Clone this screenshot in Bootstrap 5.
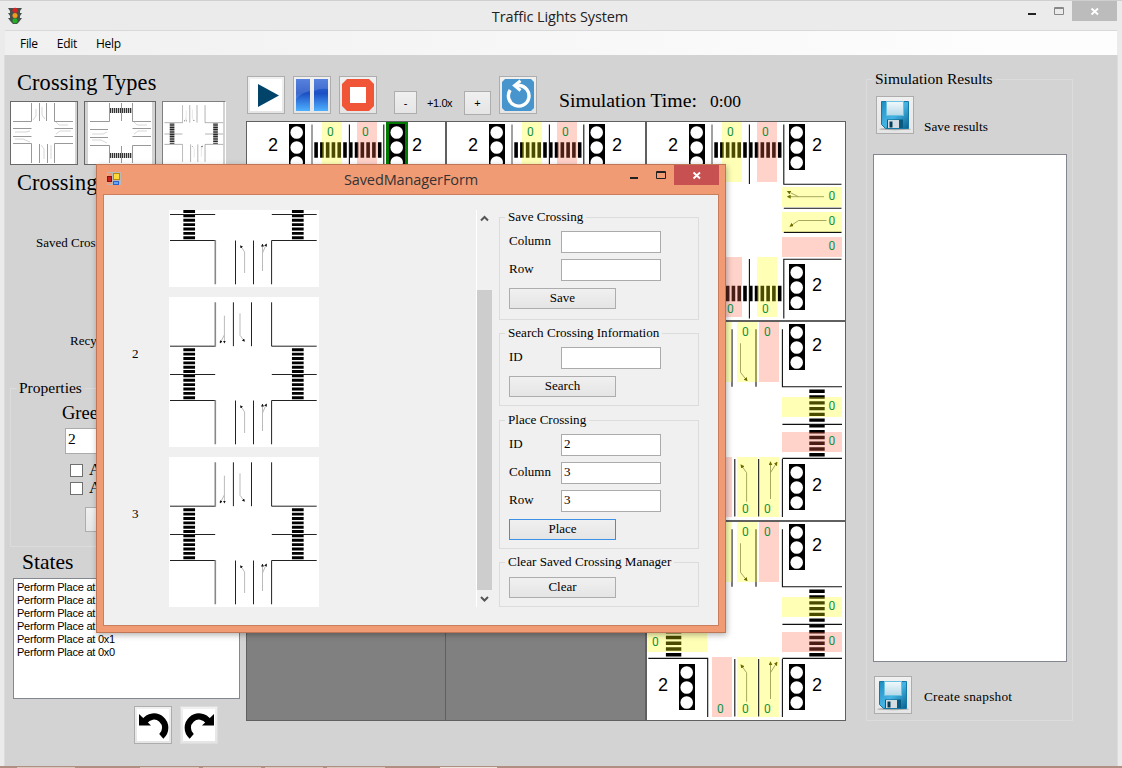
<!DOCTYPE html>
<html lang="en">
<head>
<meta charset="utf-8">
<title>Traffic Lights System</title>
<link href="https://cdn.jsdelivr.net/npm/bootstrap@5.3.0/dist/css/bootstrap.min.css" rel="stylesheet">
<style>
  body { background:#ebebeb; font-family:"Liberation Serif",serif; font-size:13px; line-height:16px; color:#000; overflow:hidden; }
  .app-window { width:1122px; height:768px; border-top:1px solid #cfcfcf; overflow:hidden; }
  .title-row { height:29px; font-family:"Open Sans",sans-serif; font-size:14.5px; letter-spacing:-.12px; color:#222; padding-top:2px; }
  .title-row .app-icon { left:6px; top:4px; }
  .win-buttons { top:0; }
  .win-btn-box { width:27px; height:20px; }
  .close-box { width:45px; height:20px; background:#bcbcbc; }
  .menu-row { height:25px; margin:0 5px; border-top:1px solid #d9d9d9; background:linear-gradient(90deg,#f0f0f0,#fdfdfd 90%); font-family:"Open Sans",sans-serif; font-size:12px; letter-spacing:-.3px; padding:1px 0 0 15px; gap:19px; }
  .work-area { height:711px; margin:0 4px; border:1px solid #dcdcdc; border-width:0 1px; background:#d3d3d3; }
  .bottom-strip { height:2px; background:linear-gradient(90deg,#b08f82 17px,#d9c7be 17px 75px,#b08f82 75px 140px,#d9c7be 140px 199px,#b08f82 199px 203px,#d9c7be 203px 261px,#b08f82 261px 265px,#d9c7be 265px 323px,#b08f82 323px 327px,#d9c7be 327px 385px,#b08f82 385px 440px,#f0e6e0 440px 497px,#b08f82 497px) 0 1px/100% 1px no-repeat #b08f82; }
  .col-left { width:241px; }
  .col-board { width:600px; }
  .big-title { font-size:22.3px; height:28px; line-height:28px; white-space:nowrap; }
  .line16 { height:16px; white-space:nowrap; }
  .type-btn { height:64px; border:1px solid #696969; background:#d3d3d3; }
  .type-btn.sunken { border-color:#808080 #fff #d3d3d3 #808080; }
  .type-btn svg, .board svg, .thumb svg { display:block; }
  .group-frame { border:1px solid #dcdcdc; position:relative; }
  .group-caption { position:absolute; top:-9px; left:5px; padding:0 3px; white-space:nowrap; line-height:16px; }
  .gray-back .group-caption { background:#d3d3d3; font-size:15.5px; }
  .field-box { background:#fff; border:1px solid #ababab; height:22px; width:100px; padding:0 2px; line-height:17px; }
  .tick-box { width:13px; height:13px; border:1px solid #707070; background:#fff; }
  .state-list { width:227px; height:121px; border:1px solid #828790; background:#fff; font:11px/13px "Liberation Sans",sans-serif; letter-spacing:-.24px; padding:2px 3px; }
  .tool-btn { width:38px; height:38px; border:1px solid #adadad; background:linear-gradient(#f0f0f0,#e5e5e5); padding:0; }
  .tool-btn svg { display:block; margin:2px; }
  .tool-bar { height:66px; }
  .speed-btn { border:1px solid #adadad; background:linear-gradient(#f0f0f0,#e5e5e5); font:11px/22px "Liberation Sans",sans-serif; text-align:center; }
  .board { width:600px; height:600px; display:grid; grid-template-columns:repeat(3,200px); background:gray; outline:1px solid #606060; outline-offset:-1px; }
  .board .n2 { font-family:"Liberation Sans",sans-serif; font-size:18px; }
  .board .n0 { font-family:Roboto,sans-serif; font-size:12px; fill:#12913f; }
  .results-frame { width:207px; height:642px; margin:24px 0 0 20px; }
  .results-list { width:194px; height:508px; border:1px solid #828790; background:#fff; }

  .dialog-window { position:absolute; left:96px; top:164px; width:630px; height:469px; background:#f19b75; border:1px solid #bf7655; box-shadow:1px 2px 6px rgba(0,0,0,.3); }
  .dialog-title { height:29px; font-family:"Open Sans",sans-serif; font-size:14.5px; letter-spacing:-.1px; color:#333; padding-top:1px; }
  .dialog-title .app-icon { left:9px; top:6px; }
  .dialog-title .close-box { background:#c75050; }
  .dialog-body { margin:0 6px; height:432px; background:#f0f0f0; border:1px solid #c97f5e; padding-top:15px; }
  .saved-list { width:372px; height:397px; overflow:hidden; }
  .saved-row { height:150px; margin-bottom:10px; }
  .saved-id { width:65px; padding:0 0 36px 28px; line-height:16px; }
  .thumb { width:150px; height:150px; background:#fff; }
  .scroll-track { width:16px; height:397px; border-left:1px solid #fff; }
  .scroll-thumb { height:300px; background:#cdcdcd; }
  .group-col { width:200px; margin-left:7px; }
  .group-col .group-frame { padding:13px 0 0 9px; margin-bottom:14px; }
  .group-col .group-caption { background:#f0f0f0; font-size:13.1px; }
  .field-line { height:22px; margin-bottom:6px; }
  .field-line span { width:52px; line-height:20px; }
  .push-btn { display:block; width:107px; height:21px; margin-top:7px; border:1px solid #adadad; background:linear-gradient(#f0f0f0,#e5e5e5); text-align:center; line-height:17px; padding:0; }
  .push-btn.is-default { border-color:#3c91e6; }
</style>
</head>
<body>
<svg width="0" height="0" class="position-absolute">
  <defs>
    <marker id="tip" viewBox="0 0 6 6" refX="4" refY="3" markerWidth="4" markerHeight="4" markerUnits="userSpaceOnUse" orient="auto"><path d="M0 0L6 3L0 6z" fill="#333300"/></marker>
    <marker id="tipS" viewBox="0 0 6 6" refX="4" refY="3" markerWidth="3" markerHeight="3" markerUnits="userSpaceOnUse" orient="auto"><path d="M0 0L6 3L0 6z" fill="#111"/></marker>
    <!-- three-lamp traffic light -->
    <symbol id="lamp" viewBox="0 0 16 46"><rect width="16" height="46"/><g fill="#fff"><circle cx="7.7" cy="8.5" r="6.3"/><circle cx="7.7" cy="23.5" r="6.3"/><circle cx="7.7" cy="38.5" r="6.3"/></g></symbol>
    <!-- board crossing with horizontal pedestrian strips -->
    <symbol id="crossA" viewBox="0 0 200 200">
      <rect width="200" height="200" fill="#fff"/>
      <g stroke-width="15.4" stroke="#000" stroke-dasharray="3.6 2.18"><path d="M68.3 29H136M68.3 172.5H136"/></g>
      <g stroke="#111" fill="none" stroke-width="1.1"><path d="M103.4 3.5V63M103.4 138V197.5M137.8 3.5V63.2H195.5M137.8 87.3H195.5M137.8 111.4H195.5M195.5 138.2H137.8V197.5"/><path d="M66 3.5V63H4M66 197V138H4" stroke="#555"/></g>
      <g fill="none" stroke="#777" stroke-width=".9"><path d="M178 75.7H142" marker-end="url(#tip)"/><path d="M152.5 75.7L142 70.5" marker-end="url(#tip)"/><path d="M180.5 99.5H152.5L144.5 105" marker-end="url(#tip)"/></g>
      <g fill="#ff0" fill-opacity=".29"><path d="M76 1h20v60H76zM136 66h60v20h-60zM136 91h60v20h-60zM111 136h20v60h-20z"/></g>
      <g fill="#ff6347" fill-opacity=".29"><path d="M111 1h20v60h-20zM136 116h60v20h-60zM76 136h20v60H76z"/></g>
      <use href="#lamp" x="43" y="3" width="16" height="46"/><use href="#lamp" x="143" y="3" width="16" height="46"/><use href="#lamp" x="143" y="143" width="16" height="46"/>
      <path d="M0 .5H200M0 199.5H200M.5 0V200M199.5 0V200" stroke="#606060"/>
    </symbol>
    <!-- board crossing with vertical pedestrian strips -->
    <symbol id="crossB" viewBox="0 0 200 200">
      <rect width="200" height="200" fill="#fff"/>
      <g stroke-width="15.4" stroke="#000" stroke-dasharray="3.4 2.37"><path d="M171 68.6V136M27.6 68.6V136"/></g>
      <g stroke="#111" fill="none" stroke-width="1.1"><path d="M86 8.3V65.7M110 8.3V65.7M136.4 8.3V65.7H196M136.4 103.4H196M196 137.4H136.4M136.4 138V196M88.8 138V195.5M112.7 138V195.5M2.3 137.4H61.7V196M2.3 103.4H62"/></g>
      <g fill="none" stroke="#777" stroke-width=".9"><path d="M94.5 22.3V51.3L100.7 59.3" marker-end="url(#tip)"/><path d="M100.6 180.7V151.7L95.3 144.3" marker-end="url(#tip)"/><path d="M124.5 178V141.7" marker-end="url(#tip)"/><path d="M124.5 151.7L130.7 141.7" marker-end="url(#tip)"/></g>
      <g fill="#ff0" fill-opacity=".29"><path d="M66 1h20v60H66zM91 1h20v60H91zM136 76h60v20h-60zM91 136h20v60H91zM113 136h20v60h-20zM1 111h60v20H1z"/></g>
      <g fill="#ff6347" fill-opacity=".29"><path d="M113 1h20v60h-20zM136 111h60v20h-60zM66 136h20v60H66z"/></g>
      <use href="#lamp" x="143" y="3" width="16" height="46"/><use href="#lamp" x="143" y="143" width="16" height="46"/><use href="#lamp" x="33" y="143" width="16" height="46"/>
      <path d="M0 .5H200M0 199.5H200M.5 0V200M199.5 0V200" stroke="#606060"/>
    </symbol>
    <!-- saved crossing picture -->
    <symbol id="crossThumb" viewBox="0 0 150 150">
      <g stroke-width="11.7" stroke="#000" stroke-dasharray="2.9 1.46"><path d="M20.2 51.3V102.2M128.8 51.3V102.2"/></g>
      <g stroke="#222" fill="none"><path d="M64.4 5.3V49.2M82.5 5.3V49.2M102.6 5.3V49.2H147.7M1 49.2H46.5M1 77.5H46.2M102.8 77.5H147.7M1 103.5H46.5M147.7 103.5H102.6V147.3M66.5 103.5V147.3M84.5 103.5V147.3"/><path d="M46.3 5.3V49.6M46.3 103.2V147.3" stroke="#888" stroke-width="1.6"/></g>
      <g fill="none" stroke="#bbb"><path d="M55.4 18.7V45.6" marker-end="url(#tipS)"/><path d="M55.4 38L51.3 45.6" marker-end="url(#tipS)"/><path d="M71 16.3V38.3L75.2 44" marker-end="url(#tipS)"/><path d="M75.6 136V115L71.7 109" marker-end="url(#tipS)"/><path d="M93.5 134V107.5" marker-end="url(#tipS)"/><path d="M93.5 116L97.3 107.3" marker-end="url(#tipS)"/></g>
    </symbol>
    <!-- floppy disk -->
    <linearGradient id="blueG" x1="0" y1="0" x2="1" y2="1"><stop offset="0" stop-color="#1f8cc0"/><stop offset=".5" stop-color="#45b4e4"/><stop offset="1" stop-color="#07618f"/></linearGradient>
    <linearGradient id="labelG" x1="0" y1="0" x2="0" y2="1"><stop offset="0" stop-color="#f2f9fc"/><stop offset="1" stop-color="#b5d9e8"/></linearGradient>
    <symbol id="disk" viewBox="0 0 32 32"><ellipse cx="16" cy="30" rx="16" ry="1.2" fill="#aaa"/><path d="M2.500 2.500H29.500V29.500H6.500L2.500 25.500z" fill="url(#blueG)" stroke="#1676a4"/><rect x="7.500" y="2.500" width="17" height="14" fill="url(#labelG)" stroke="#6cc0e0"/><rect x="8" y="20.500" width="16" height="8.500" fill="#075a80"/><path d="M9 21h11v8H9z" fill="#d5dde2"/><path d="M10.500 22.500h3v6h-3z" fill="#073f5b"/></symbol>
    <linearGradient id="pauseG" x1="0" y1="0" x2="0" y2="1"><stop offset="0" stop-color="#3a6bd8"/><stop offset=".45" stop-color="#1c50c4"/><stop offset="1" stop-color="#4fb0ff"/></linearGradient>
  </defs>
</svg>

<div class="app-window d-flex flex-column position-relative">
  <div class="title-row position-relative d-flex align-items-center justify-content-center">
    <svg class="app-icon position-absolute" width="18" height="20" viewBox="0 0 18 20"><path d="M4 3h10l2 0-2 3v2l2 0-2 3v2l2 0-3 4-2 2H7l-2-2-3-4h2v-2L2 8h2V6L2 3z" fill="#47514c"/><circle cx="9" cy="5.300" r="2.500" fill="#d92222"/><circle cx="9" cy="10.600" r="2.500" fill="#f39a1e"/><circle cx="9" cy="15.800" r="2.500" fill="#20b020"/></svg>
    <span class="me-1 pe-0" style="margin-left:2px">Traffic Lights System</span>
    <div class="win-buttons position-absolute end-0 d-flex" style="margin-right:5px">
      <svg class="win-btn-box" viewBox="0 0 27 20"><path d="M10 13h8" stroke="#222" stroke-width="2"/></svg>
      <svg class="win-btn-box" viewBox="0 0 27 20"><path d="M9.500 6.500h9v7h-9zM9 7.500h10" stroke="#888" fill="none"/></svg>
      <svg class="close-box" width="45" height="20" viewBox="0 0 45 20"><path d="M19.500 7.500l6.500 6M26 7.500l-6.500 6" stroke="#fff" stroke-width="1.900"/></svg>
    </div>
  </div>
  <div class="menu-row d-flex align-items-center"><span>File</span><span>Edit</span><span>Help</span></div>

  <div class="work-area d-flex align-items-start">
    <!-- crossing palette, properties and log -->
    <div class="col-left d-flex flex-column">
      <div class="big-title" style="margin:14px 0 4px 12px;letter-spacing:.150px">Crossing Types</div>
      <div class="d-flex" style="margin-left:5px">
        <div class="type-btn" style="width:68px">
          <svg width="66" height="62"><rect width="64" height="62" fill="#fff"/><g stroke="#999" fill="none"><path d="M2 19.500H20.500V1M28.500 1V19M35.500 1V19M62 19.500H43.500V1M2 26.500H20.500M2 34.500H20.500M43.500 26.500H62M43.500 34.500H62M2 41.500H20.500V61M28.500 42V61M36.500 42V61M62 41.500H43.500V61"/><path d="M25 7V14L22 18M31 5V13L34 17M4 30H15L19 29M4 37H12L19 40M45 20L48 23H57M45 32L49 29H60M33 57V47L30 43M40 57V43" stroke="#ccc" stroke-width=".8"/></g></svg>
        </div>
        <div class="type-btn" style="width:72px;margin-left:6px">
          <svg width="70" height="62"><rect x="3" width="64" height="62" fill="#fff"/><g stroke="#333" stroke-width="5" stroke-dasharray="1.300 .7"><path d="M25 8.500H47M25 53.500H47"/></g><g stroke="#999" fill="none"><path d="M5 19.500H24.500V1M36.500 1V19M66 19.500H47.500V1M5 27.500H23M5 35.500H23M47.500 26.500H66M47.500 34.500H66M5 43.500H24.500V61M36.500 44V61M66 43.500H47.500V61"/><path d="M7 32H18L22 30M7 38H16L22 41M49 20L52 23H62M49 32L53 29H62" stroke="#ccc" stroke-width=".8"/></g></svg>
        </div>
        <div class="type-btn sunken" style="width:64px;margin-left:6px">
          <svg width="62" height="62"><rect width="60" height="62" fill="#fff"/><g opacity=".85"><use href="#crossThumb" x="1" y="1" width="60" height="60"/></g></svg>
        </div>
      </div>
      <div class="big-title" style="margin:4px 0 0 12px;letter-spacing:.150px">Crossing</div>
      <div class="line16" style="margin:38px 0 0 31px">Saved Crossings</div>
      <div class="line16" style="margin:82px 0 0 65px">Recycle Bin</div>
      <div class="group-frame gray-back" style="margin:39px 0 0 5px;height:159px">
        <div class="group-caption">Properties</div>
        <div style="font-size:18.500px;margin:14px 0 0 51px;line-height:20px">Green Time</div>
        <div class="field-box" style="width:120px;height:26px;font-size:15.500px;line-height:19px;margin:5px 0 0 54px">2</div>
        <div class="d-flex align-items-center gap-1" style="height:18px;margin:7px 0 0 59px;font-size:17px"><span class="tick-box" style="margin-right:2px"></span>All sides</div>
        <div class="d-flex align-items-center gap-1" style="height:18px;margin:0 0 0 59px;font-size:17px"><span class="tick-box" style="margin-right:2px"></span>All cells</div>
        <div class="push-btn" style="margin:10px 0 0 74px;height:25px;width:80px"></div>
      </div>
      <div class="big-title" style="margin:1px 0 2px 17px;font-size:21.500px">States</div>
      <div class="state-list" style="margin-left:8px">
        <div>Perform Place at 1x2</div><div>Perform Place at 2x2</div><div>Perform Place at 1x1</div><div>Perform Place at 0x2</div><div>Perform Place at 0x1</div><div>Perform Place at 0x0</div>
      </div>
      <div class="d-flex" style="margin:7px 0 0 129px;gap:8px">
        <div class="tool-btn"><svg width="32" height="32"><rect width="32" height="32" fill="#fff"/><path d="M7.500 12.500A11.300 11.300 0 1 1 24.300 27.300" fill="none" stroke="#000" stroke-width="6.300"/><path d="M2 5L14 16.500H2z"/></svg></div>
        <div class="tool-btn" style="border-color:#ddd"><svg width="32" height="32"><rect width="32" height="32" fill="#fff"/><path d="M25.500 12.500A11.300 11.300 0 1 0 8.700 27.300" fill="none" stroke="#000" stroke-width="6.300"/><path d="M31 5L19 16.500H31z"/></svg></div>
      </div>
    </div>

    <!-- playback tools and crossing grid -->
    <div class="col-board">
      <div class="tool-bar d-flex align-items-start">
        <div class="tool-btn" style="margin:21px 0 0 1px"><svg width="32" height="32"><rect width="32" height="32" fill="#fff"/><path d="M8 5L29 16.500L8 28z" fill="#02436a"/></svg></div>
        <div class="tool-btn" style="margin:21px 0 0 8px"><svg width="32" height="32"><path d="M0 0h14v32H0zM18 0h14v32H18z" fill="url(#pauseG)"/><path d="M0 0h14v12Q5 14 0 20zM18 0h14v10Q24 9 18 12z" fill="#fff" opacity=".15"/></svg></div>
        <div class="tool-btn" style="margin:21px 0 0 8px"><svg width="32" height="32"><path d="M5 0H27L32 5V27L27 32H5L0 27V5z" fill="#f05537"/><rect x="8" y="8" width="16" height="16" fill="#fff"/></svg></div>
        <div class="speed-btn" style="width:23px;height:23px;margin:36px 0 0 17px">-</div>
        <div style="width:26px;margin:40px 0 0 10px;font:11px/16px 'Liberation Sans',sans-serif;letter-spacing:-.400px">+1.0x</div>
        <div class="speed-btn" style="width:27px;height:24px;margin:36px 0 0 11px">+</div>
        <div class="tool-btn" style="margin:21px 0 0 8px"><svg width="32" height="32"><path d="M3 0H29L32 3V29L29 32H3L0 29V3z" fill="#4795cc"/><path d="M8.200 11A10.300 10.300 0 1 0 17 6.500H13" fill="none" stroke="#fff" stroke-width="3.400"/><path d="M18.500 1.800L12.500 6.500L18.500 11.500" fill="none" stroke="#fff" stroke-width="3"/></svg></div>
        <div class="text-nowrap" style="margin:35px 0 0 22px;font-size:19.800px;line-height:20px;width:151px">Simulation Time:</div>
        <div style="margin:36px 0 0 0;font-size:17.500px;line-height:20px">0:00</div>
      </div>
      <div class="board">
        <svg width="200" height="200"><use href="#crossA"/><path d="M141.500 1V51M160.500 1V51" stroke="#007a00" stroke-width="3"/><path d="M140 2H162" stroke="#007a00" stroke-width="2"/><text class="n2" x="22" y="29.500">2</text><text class="n2" x="166" y="29.500">2</text><text class="n0" x="81" y="15">0</text><text class="n0" x="116" y="15">0</text></svg>
        <svg width="200" height="200"><use href="#crossA"/><text class="n2" x="22" y="29.500">2</text><text class="n2" x="166" y="29.500">2</text><text class="n0" x="81" y="15">0</text><text class="n0" x="116" y="15">0</text></svg>
        <svg width="200" height="200"><use href="#crossA"/><text class="n2" x="22" y="29.500">2</text><text class="n2" x="166" y="29.500">2</text><text class="n2" x="166" y="169.500">2</text><g class="n0"><text x="81" y="15">0</text><text x="116" y="15">0</text><text x="182.500" y="79">0</text><text x="182.500" y="104">0</text><text x="182.500" y="129">0</text><text x="81" y="192">0</text><text x="116" y="192">0</text></g></svg>
        <svg width="200" height="200"><path d="M199.500 0V200M0 199.500H200" stroke="#606060"/></svg>
        <svg width="200" height="200"><path d="M199.500 0V200M0 199.500H200" stroke="#606060"/></svg>
        <svg width="200" height="200"><use href="#crossB"/><text class="n2" x="166" y="29.500">2</text><text class="n2" x="166" y="169.500">2</text><g class="n0"><text x="96" y="15">0</text><text x="118" y="15">0</text><text x="182.500" y="89">0</text><text x="182.500" y="124">0</text><text x="96" y="192">0</text><text x="118" y="192">0</text></g></svg>
        <svg width="200" height="200"><path d="M199.500 0V200" stroke="#606060"/></svg>
        <svg width="200" height="200"><path d="M199.500 0V200" stroke="#606060"/></svg>
        <svg width="200" height="200"><use href="#crossB"/><text class="n2" x="12" y="169.500">2</text><text class="n2" x="166" y="29.500">2</text><text class="n2" x="166" y="169.500">2</text><g class="n0"><text x="96" y="15">0</text><text x="118" y="15">0</text><text x="182.500" y="89">0</text><text x="182.500" y="124">0</text><text x="71" y="192">0</text><text x="96" y="192">0</text><text x="118" y="192">0</text><text x="6" y="125">0</text></g></svg>
      </div>
    </div>

    <!-- results -->
    <div class="group-frame gray-back results-frame d-flex flex-column">
      <div class="group-caption">Simulation Results</div>
      <div class="d-flex" style="margin:16px 0 0 9px"><div class="tool-btn"><svg width="32" height="32"><use href="#disk"/></svg></div><div style="margin:23px 0 0 10px;font-size:13.300px">Save results</div></div>
      <div class="results-list" style="margin:19px 0 0 6px"></div>
      <div class="d-flex" style="margin:14px 0 0 7px"><div class="tool-btn"><svg width="32" height="32"><use href="#disk"/></svg></div><div style="margin:13px 0 0 12px;font-size:13.300px;letter-spacing:.250px">Create snapshot</div></div>
    </div>
  </div>
  <div class="bottom-strip"></div>
</div>

<div class="dialog-window">
  <div class="dialog-title position-relative d-flex align-items-center justify-content-center">
    <svg class="app-icon position-absolute" width="16" height="16"><path d="M1.500 1.500h13v12h-13zM1.500 9.500h13M6.500 1.500v12" stroke="#b9b9b9" fill="none"/><rect x="1.500" y="5.500" width="4" height="5" fill="#c81e1e" stroke="#8d1010"/><rect x="7.500" y="2.500" width="6" height="6" fill="#ffd83a" stroke="#b8860b"/><rect x="7.500" y="10.500" width="5" height="3" fill="#6aa4f5" stroke="#2e62c8"/></svg>
    <span>SavedManagerForm</span>
    <div class="win-buttons position-absolute end-0 d-flex" style="margin-right:6px">
      <svg class="win-btn-box" viewBox="0 0 27 20"><path d="M10 13h8" stroke="#222" stroke-width="2"/></svg>
      <svg class="win-btn-box" viewBox="0 0 27 20"><path d="M9.500 6.500h9v7h-9zM9 7.500h10" stroke="#222" fill="none"/></svg>
      <svg class="close-box" width="45" height="20" viewBox="0 0 45 20"><path d="M19.500 7.500l6.500 6M26 7.500l-6.500 6" stroke="#fff" stroke-width="1.900"/></svg>
    </div>
  </div>
  <div class="dialog-body d-flex align-items-start">
    <div class="saved-list d-flex flex-column justify-content-end">
      <div class="saved-row d-flex flex-shrink-0 align-items-center"><span class="saved-id"></span><div class="thumb"><svg width="150" height="150"><use href="#crossThumb"/></svg></div></div>
      <div class="saved-row d-flex flex-shrink-0 align-items-center"><span class="saved-id">2</span><div class="thumb"><svg width="150" height="150"><use href="#crossThumb"/></svg></div></div>
      <div class="saved-row d-flex flex-shrink-0 align-items-center mb-0"><span class="saved-id">3</span><div class="thumb"><svg width="150" height="150"><use href="#crossThumb"/></svg></div></div>
    </div>
    <div class="scroll-track d-flex flex-column justify-content-between">
      <svg class="flex-shrink-0" width="15" height="17"><path d="M4 10.500L7.500 7L11 10.500" fill="none" stroke="#555" stroke-width="2"/></svg>
      <div class="scroll-thumb mt-auto"></div>
      <svg class="flex-shrink-0" width="15" height="17"><path d="M4 7L7.500 10.500L11 7" fill="none" stroke="#555" stroke-width="2"/></svg>
    </div>
    <div class="group-col" style="margin-top:7px">
      <div class="group-frame" style="height:103px;margin-bottom:13px"><div class="group-caption">Save Crossing</div>
        <div class="field-line d-flex"><span>Column</span><div class="field-box"></div></div>
        <div class="field-line d-flex"><span>Row</span><div class="field-box"></div></div>
        <div class="push-btn">Save</div></div>
      <div class="group-frame" style="height:73px"><div class="group-caption">Search Crossing Information</div>
        <div class="field-line d-flex"><span>ID</span><div class="field-box"></div></div>
        <div class="push-btn">Search</div></div>
      <div class="group-frame" style="height:129px;margin-bottom:13px"><div class="group-caption">Place Crossing</div>
        <div class="field-line d-flex"><span>ID</span><div class="field-box">2</div></div>
        <div class="field-line d-flex"><span>Column</span><div class="field-box">3</div></div>
        <div class="field-line d-flex"><span>Row</span><div class="field-box">3</div></div>
        <div class="push-btn is-default">Place</div></div>
      <div class="group-frame mb-0" style="height:45px"><div class="group-caption">Clear Saved Crossing Manager</div>
        <div class="push-btn" style="margin-top:1px">Clear</div></div>
    </div>
  </div>
</div>
<script src="https://cdn.jsdelivr.net/npm/bootstrap@5.3.0/dist/js/bootstrap.bundle.min.js"></script>
</body>
</html>
